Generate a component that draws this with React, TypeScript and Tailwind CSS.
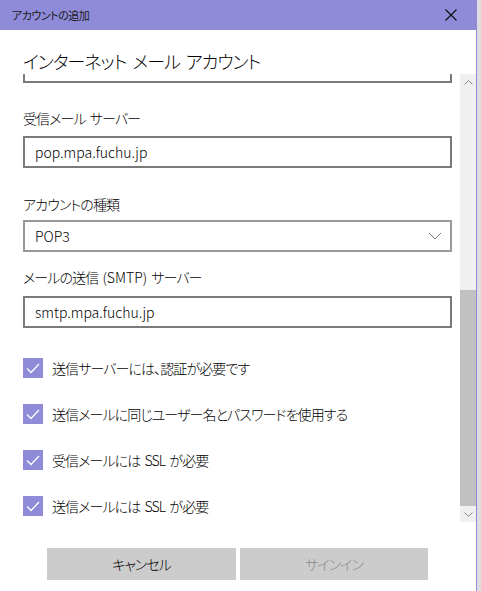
import React from "react";

const font = "font-['Noto_Sans_CJK_JP','Noto_Sans',sans-serif] [font-feature-settings:'palt'] font-light";
const jp = "text-[14px] tracking-[-0.9px] [word-spacing:2px] text-black";

function Check() {
  return (
    <div className="w-5 h-5 bg-[#8f8bd8] flex items-center justify-center shrink-0">
      <svg width="14" height="11" viewBox="0 0 14 11" fill="none">
        <path d="M1 5.5 L5 9.5 L13 1" stroke="#fff" strokeWidth="1.3" />
      </svg>
    </div>
  );
}

function TextBox({ value }: { value: string }) {
  return (
    <div className="h-8 border-2 border-[#7a7a7a] flex items-center px-[10px] text-[14px] text-black">
      {value}
    </div>
  );
}

const options = [
  "送信サーバーには、認証が必要です",
  "送信メールに同じユーザー名とパスワードを使用する",
  "受信メールには SSL が必要",
  "送信メールには SSL が必要",
];

export default function App() {
  return (
    <div className={`flex w-[481px] h-[591px] overflow-hidden bg-white ${font}`}>
      <div className="w-[477px] h-full flex flex-col border-r border-[#8f8bd8]">
        {/* Title bar */}
        <div className="h-[30px] bg-[#8f8bd8] flex items-center justify-between pl-3 pr-[18px] shrink-0">
          <span className="text-[11px] tracking-[-0.5px] text-[#1a1a1a] font-normal">アカウントの追加</span>
          <svg width="14" height="14" viewBox="0 0 14 14">
            <path d="M1.5 1.5 L12.5 12.5 M12.5 1.5 L1.5 12.5" stroke="#111" strokeWidth="1.2" />
          </svg>
        </div>

        {/* Body */}
        <div className="flex h-[492px] shrink-0">
          <div className="flex-1 pl-[23px] pr-[8px] flex flex-col">
            <div className="mt-[18px] h-[26px] leading-[26px] text-[18px] tracking-[-1px] [word-spacing:3px] text-black">
              インターネット メール アカウント
            </div>
            <div className="h-[9px] border-2 border-t-0 border-[#7a7a7a]" />

            <div className={`mt-[25px] h-5 leading-5 ${jp}`}>受信メール サーバー</div>
            <div className="mt-2">
              <TextBox value="pop.mpa.fuchu.jp" />
            </div>

            <div className={`mt-[26px] h-5 leading-5 ${jp}`}>アカウントの種類</div>
            <div className="mt-[6px] h-8 border-2 border-[#999] flex items-center justify-between pl-[10px] pr-[8px] text-[14px] text-black">
              <span>POP3</span>
              <svg width="14" height="8" viewBox="0 0 14 8" fill="none">
                <path d="M1 1 L7 7 L13 1" stroke="#777" strokeWidth="1" />
              </svg>
            </div>

            <div className={`mt-[15px] h-5 leading-5 ${jp}`}>
              メールの送信 <span className="tracking-normal">(SMTP)</span> サーバー
            </div>
            <div className="mt-[9px]">
              <TextBox value="smtp.mpa.fuchu.jp" />
            </div>

            <div className="mt-[30px] flex flex-col gap-[26px]">
              {options.map((o) => (
                <div key={o} className="flex items-center gap-[9px] h-5">
                  <Check />
                  <span className={`leading-5 ${jp}`}>{o}</span>
                </div>
              ))}
            </div>
          </div>

          {/* Scrollbar */}
          <div className="w-4 pt-[44px] flex flex-col shrink-0">
            <div className="flex-1 bg-[#f0f0f0] flex flex-col">
              <div className="h-4 flex items-center justify-center">
                <svg width="9" height="5" viewBox="0 0 9 5" fill="none">
                  <path d="M0.5 4.5 L4.5 0.5 L8.5 4.5" stroke="#888" strokeWidth="1" />
                </svg>
              </div>
              <div className="h-[200px]" />
              <div className="flex-1 bg-[#c1c1c1]" />
              <div className="h-4 flex items-center justify-center">
                <svg width="9" height="5" viewBox="0 0 9 5" fill="none">
                  <path d="M0.5 0.5 L4.5 4.5 L8.5 0.5" stroke="#888" strokeWidth="1" />
                </svg>
              </div>
            </div>
          </div>
        </div>

        {/* Buttons */}
        <div className="mt-[26px] pl-[47px] flex gap-1">
          <button className="w-[189px] h-8 bg-[#cccccc] text-[14px] tracking-[-1px] text-black">キャンセル</button>
          <button className="w-[188px] h-8 bg-[#cccccc] text-[14px] tracking-[-1px] text-[#8a8a8a]">サインイン</button>
        </div>
      </div>
      <div className="flex-1 h-full bg-[#dedede]" />
    </div>
  );
}
